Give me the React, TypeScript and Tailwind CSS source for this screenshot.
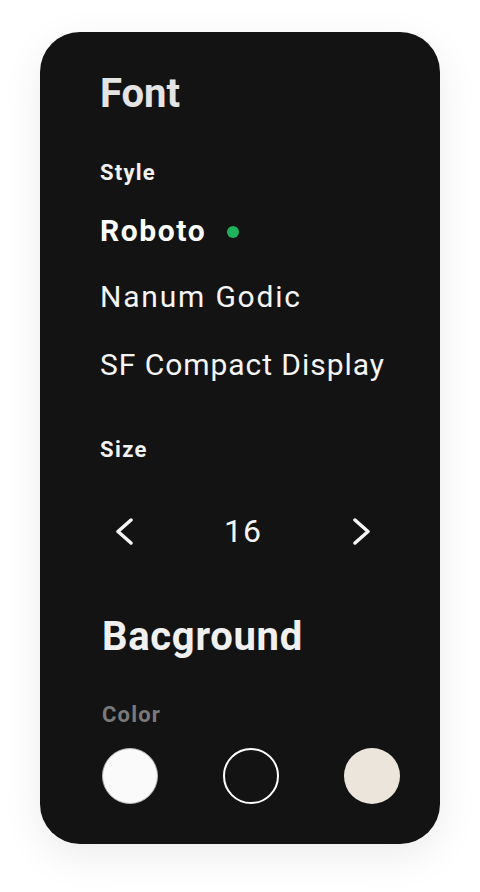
const fontStack = { fontFamily: "Roboto, 'Liberation Sans', sans-serif" };

function Chevron({ dir }: { dir: "left" | "right" }) {
  return (
    <svg width="17" height="27" viewBox="0 0 17 27" fill="none">
      <path
        d={dir === "left" ? "M15 2 L2 13.5 L15 25" : "M2 2 L15 13.5 L2 25"}
        stroke="#f5f5f5"
        strokeWidth="3.5"
        strokeLinecap="round"
        strokeLinejoin="round"
      />
    </svg>
  );
}

export default function App() {
  return (
    <div className="min-h-screen bg-white flex justify-center pt-[32px]" style={fontStack}>
      {/* settings card */}
      <div className="w-[400px] h-[812px] rounded-[40px] bg-[#131313] shadow-[0_12px_40px_rgba(0,0,0,0.08)] pl-[60px] pt-[42px] flex flex-col">
        <h1 className="text-[40px] leading-none font-bold text-[#e4e4e4]">Font</h1>

        <h2 className="mt-[48px] text-[22px] leading-none font-bold tracking-[1.2px] text-[#f2f2f2]">Style</h2>

        <div className="mt-[32px] flex items-center">
          <span className="text-[30px] leading-none font-bold tracking-[1.6px] text-white">Roboto</span>
          <span className="ml-[21px] mt-[2px] w-[12px] h-[12px] rounded-full bg-[#1fb25a]" />
        </div>
        <span className="mt-[36px] text-[30px] leading-none tracking-[1.8px] text-[#f5f5f5]">Nanum Godic</span>
        <span className="mt-[38px] text-[30px] leading-none tracking-[0.95px] text-[#f5f5f5]">SF Compact Display</span>

        <h2 className="mt-[59px] text-[22px] leading-none font-bold tracking-[1.4px] text-[#f2f2f2]">Size</h2>

        <div className="mt-[54px] ml-4 w-[254px] flex items-center justify-between">
          <Chevron dir="left" />
          <span className="text-[32px] leading-none tracking-[1px] text-[#f5f5f5]">16</span>
          <Chevron dir="right" />
        </div>

        <div className="ml-[2px] flex flex-col">
          <h1 className="mt-[70px] text-[40px] leading-none font-bold tracking-[0.7px] text-[#f0f0f0]">Bacground</h1>
          <h2 className="mt-[47px] text-[22px] leading-none font-bold tracking-[1.2px] text-[#7a7a7a]">Color</h2>
          <div className="mt-[22px] w-[298px] flex justify-between">
            <div className="w-[56px] h-[56px] rounded-full bg-[#fafafa] border-[1.5px] border-[#b5b5b5]" />
            <div className="w-[56px] h-[56px] rounded-full border-2 border-white" />
            <div className="w-[56px] h-[56px] rounded-full bg-[#ece5dc]" />
          </div>
        </div>
      </div>
    </div>
  );
}
